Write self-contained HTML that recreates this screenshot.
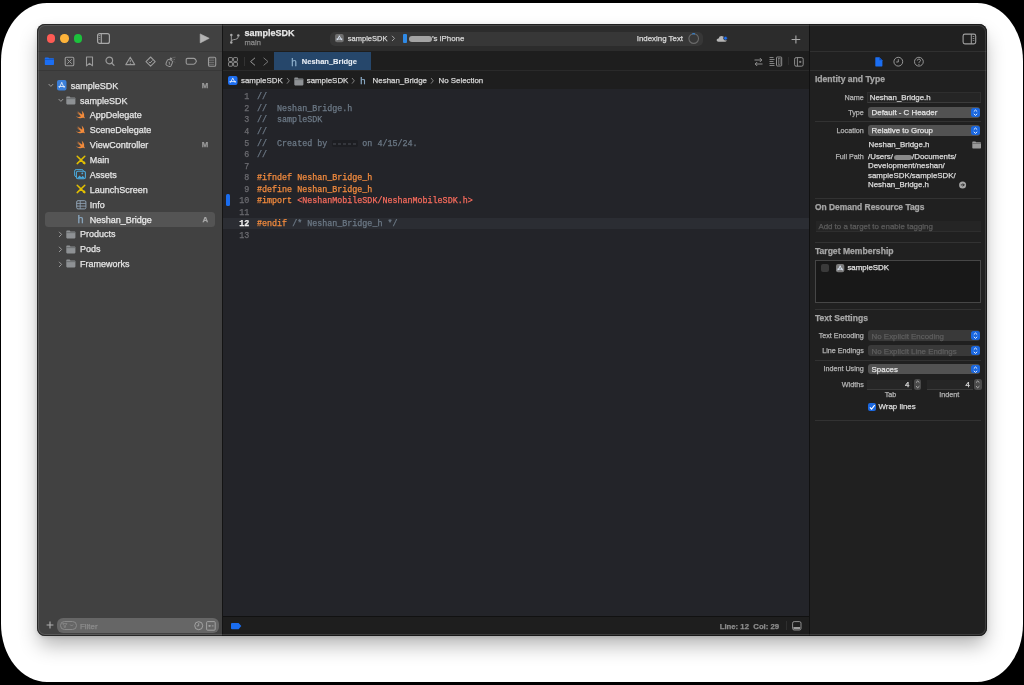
<!DOCTYPE html>
<html><head><meta charset="utf-8">
<style>
*{box-sizing:border-box}
html,body{margin:0;padding:0}
body{width:1024px;height:685px;background:#000;overflow:hidden;position:relative;font-family:"Liberation Sans",sans-serif;}
.a{position:absolute}
svg.a{overflow:visible}
.t{position:absolute;white-space:pre;line-height:1;-webkit-text-stroke:0.25px currentColor}
#paper{left:1px;top:3px;width:1022px;height:679px;background:#fff;border-radius:46px/58px}
#shadow{left:37px;top:24px;width:950px;height:612px;border-radius:8px;box-shadow:0 11px 20px -2px rgba(0,0,0,0.30),0 1px 4px rgba(0,0,0,0.12)}
#win{left:37px;top:24px;width:950px;height:612px;border-radius:8px;overflow:hidden;background:#1f1f1f}
#in{left:-37px;top:-24px;width:1024px;height:685px;will-change:transform}
</style></head><body>
<div class="a" id="paper"></div>
<div class="a" id="shadow"></div>
<div class="a" id="win"><div class="a" id="in">
<div class="a" style="left:37px;top:24px;width:185px;height:612px;background:#414141;"></div>
<div class="a" style="left:37px;top:51px;width:185px;height:1px;background:#383838;"></div>
<div class="a" style="left:37px;top:70px;width:185px;height:1px;background:#383838;"></div>
<div class="a" style="left:222px;top:24px;width:1px;height:612px;background:#141414;"></div>
<div class="a" style="left:223px;top:24px;width:586px;height:27px;background:#2c2c2c;"></div>
<div class="a" style="left:223px;top:51px;width:586px;height:19px;background:#1e1e1e;"></div>
<div class="a" style="left:223px;top:70px;width:586px;height:1px;background:#2a2a2a;"></div>
<div class="a" style="left:223px;top:71px;width:586px;height:18px;background:#1e1e1e;"></div>
<div class="a" style="left:223px;top:89px;width:586px;height:527px;background:#232429;"></div>
<div class="a" style="left:223px;top:616px;width:586px;height:1px;background:#111111;"></div>
<div class="a" style="left:223px;top:617px;width:586px;height:19px;background:#1e1e1e;"></div>
<div class="a" style="left:809px;top:24px;width:1px;height:612px;background:#111111;"></div>
<div class="a" style="left:810px;top:24px;width:177px;height:612px;background:#202020;"></div>
<div class="a" style="left:810px;top:51px;width:177px;height:1px;background:#303030;"></div>
<div class="a" style="left:810px;top:70px;width:177px;height:1px;background:#303030;"></div>
<div class="a" style="left:46.70px;top:34.35px;width:8.4px;height:8.4px;border-radius:50%;background:#fe5b54"></div>
<div class="a" style="left:60.20px;top:34.35px;width:8.4px;height:8.4px;border-radius:50%;background:#fdb33a"></div>
<div class="a" style="left:73.65px;top:34.35px;width:8.4px;height:8.4px;border-radius:50%;background:#1cc13c"></div>
<svg class="a" style="left:96px;top:32px;" width="15" height="13" viewBox="0 0 15 13"><rect x="1.6" y="1.6" width="11.8" height="9.8" rx="2" fill="none" stroke="#a8a8a8" stroke-width="1.2"/><line x1="5.3" y1="1.6" x2="5.3" y2="11.4" stroke="#a8a8a8" stroke-width="1.1"/><rect x="2.6" y="3" width="1.6" height="1" fill="#888"/><rect x="2.6" y="5" width="1.6" height="1" fill="#888"/><rect x="2.6" y="7" width="1.6" height="1" fill="#777"/></svg>
<svg class="a" style="left:199px;top:33px;" width="12" height="12" viewBox="0 0 12 12"><path d="M1.2 0.9 L10.2 5.3 L1.2 9.9 Z" fill="#b4b4b4" stroke="#b4b4b4" stroke-width="0.6" stroke-linejoin="round"/></svg>
<svg class="a" style="left:44px;top:56px;" width="11" height="10" viewBox="0 0 11 10"><path d="M0.8 2.2 Q0.8 1.4 1.6 1.4 L4.3 1.4 L5.2 2.2 L9.3 2.2 Q10 2.2 10 3 L10 8.3 Q10 9 9.3 9 L1.5 9 Q0.8 9 0.8 8.3 Z" fill="#1c6ef2"/><rect x="0.8" y="3.2" width="9.2" height="0.6" fill="#0d4fb8"/></svg>
<svg class="a" style="left:64px;top:56px;" width="11" height="11" viewBox="0 0 11 11"><rect x="1.2" y="1.2" width="8.6" height="8.6" rx="1.3" fill="none" stroke="#9a9a9a" stroke-width="1.1"/><path d="M3.3 3.3 L7.7 7.7 M7.7 3.3 L3.3 7.7" stroke="#9a9a9a" stroke-width="1"/></svg>
<svg class="a" style="left:85px;top:56px;" width="9" height="11" viewBox="0 0 9 11"><path d="M1.5 1 L7.5 1 L7.5 9.8 L4.5 7.3 L1.5 9.8 Z" fill="none" stroke="#9a9a9a" stroke-width="1.1" stroke-linejoin="round"/></svg>
<svg class="a" style="left:105px;top:56px;" width="10" height="11" viewBox="0 0 10 11"><circle cx="4.3" cy="4.5" r="3.3" fill="none" stroke="#9a9a9a" stroke-width="1.2"/><path d="M6.7 7 L9 9.4" stroke="#9a9a9a" stroke-width="1.3" stroke-linecap="round"/></svg>
<svg class="a" style="left:125px;top:56px;" width="11" height="10" viewBox="0 0 11 10"><path d="M5.25 1.2 L9.7 8.6 L0.8 8.6 Z" fill="none" stroke="#9a9a9a" stroke-width="1.1" stroke-linejoin="round"/><path d="M5.25 3.8 L5.25 6.2" stroke="#9a9a9a" stroke-width="1"/><circle cx="5.25" cy="7.4" r="0.5" fill="#9a9a9a"/></svg>
<svg class="a" style="left:145px;top:56px;" width="11" height="11" viewBox="0 0 11 11"><path d="M5.6 1 L10.2 5.6 L5.6 10.2 L1 5.6 Z" fill="none" stroke="#9a9a9a" stroke-width="1.1" stroke-linejoin="round"/><path d="M3.8 5.8 L5.1 7 L7.5 4.4" fill="none" stroke="#9a9a9a" stroke-width="1"/></svg>
<svg class="a" style="left:165px;top:56px;" width="12" height="11" viewBox="0 0 12 11"><g transform="rotate(22 4.2 7)"><rect x="1.4" y="3.8" width="5.6" height="6.4" rx="1.8" fill="none" stroke="#9a9a9a" stroke-width="1"/><rect x="3" y="1.4" width="2.2" height="2.2" rx="0.4" fill="#9a9a9a"/></g><path d="M3.6 6.2 Q5 5.6 4.4 7.2 Q3.6 8.6 5.2 8.4" fill="none" stroke="#9a9a9a" stroke-width="0.8"/><path d="M7.6 1.6 L10.6 1.2 M7.4 3.2 L10 3.6 M8.4 5 L10.2 6.4" stroke="#808080" stroke-width="0.8" stroke-dasharray="1 0.8"/></svg>
<svg class="a" style="left:185px;top:57px;" width="13" height="9" viewBox="0 0 13 9"><path d="M2.6 1.4 L8.6 1.4 Q9.8 1.4 10.6 2.6 L11.4 4.2 L10.6 5.8 Q9.8 7.2 8.6 7.2 L2.6 7.2 Q1.2 7.2 1.2 5.8 L1.2 2.8 Q1.2 1.4 2.6 1.4 Z" fill="none" stroke="#9a9a9a" stroke-width="1.1" stroke-linejoin="round"/></svg>
<svg class="a" style="left:207px;top:56px;" width="10" height="11" viewBox="0 0 10 11"><rect x="1.5" y="1.2" width="7.2" height="9" rx="1.3" fill="none" stroke="#9a9a9a" stroke-width="1.1"/><path d="M2 2.9 L7.2 2.9 M2 4.7 L7.2 4.7 M2 6.5 L7.2 6.5 M2 8.3 L7.2 8.3" stroke="#8a8a8a" stroke-width="0.6"/></svg>
<div class="a" style="left:45px;top:212px;width:170px;height:14.5px;background:#545454;border-radius:3.5px"></div>
<svg class="a" style="left:48px;top:82.5px;" width="6" height="5" viewBox="0 0 6 5"><path d="M0.6 1 L2.9 3.4 L5.2 1" fill="none" stroke="#9a9a9a" stroke-width="1"/></svg>
<svg class="a" style="left:57px;top:80.2px;" width="9.5" height="10.5" viewBox="0 0 9.5 10.5"><rect x="0" y="0" width="9.5" height="10.5" rx="2" fill="#3b7fd9"/><path d="M4.75 2.625 L7.125 7.56 M4.75 2.625 L2.375 7.56 M1.9000000000000001 6.51 L7.6000000000000005 6.51" stroke="#dfe9f7" stroke-width="0.9" stroke-linecap="round"/></svg>
<div class="t" style="left:70.7px;top:81.68px;font-size:9px;color:#e6e6e6;font-weight:400;">sampleSDK</div>
<div class="t" style="left:201.8px;top:81.90px;font-size:7.8px;color:#9a9a9a;font-weight:700;">M</div>
<svg class="a" style="left:57.5px;top:97.5px;" width="6" height="5" viewBox="0 0 6 5"><path d="M0.6 1 L2.9 3.4 L5.2 1" fill="none" stroke="#9a9a9a" stroke-width="1"/></svg>
<svg class="a" style="left:66px;top:96px;" width="10" height="9" viewBox="0 0 10 9"><path d="M0.3 1.3 Q0.3 0.5 1.1 0.5 L3.6 0.5 L4.5 1.4 L8.6 1.4 Q9.4 1.4 9.4 2.2 L9.4 7.6 Q9.4 8.4 8.6 8.4 L1.1 8.4 Q0.3 8.4 0.3 7.6 Z" fill="#8e9194"/><rect x="0.3" y="2.4" width="9.1" height="0.7" fill="#5e6163"/></svg>
<div class="t" style="left:79.9px;top:96.55px;font-size:9px;color:#e6e6e6;font-weight:400;">sampleSDK</div>
<svg class="a" style="left:75px;top:110.44px;" width="11" height="9" viewBox="0 0 11 9"><path d="M6.4 0.6 C8.6 2.2 9.6 4.4 9.1 6.4 C9.6 7.1 9.9 7.8 9.8 8.4 C9.3 7.8 8.6 7.6 7.9 7.8 C6.3 8.6 3.8 8.7 0.7 6.3 C2.6 7.1 4.5 7.2 6 6.3 C4.2 5.2 2.7 3.7 1.5 2.1 C2.9 3.2 4.3 4.2 5.2 4.7 C4.1 3.6 3.2 2.4 2.4 1.1 C4.3 2.9 6.2 4.2 7.1 4.8 C7.5 3.6 7.3 2.1 6.4 0.6 Z" fill="#f38b3b"/></svg>
<div class="t" style="left:89.8px;top:111.42px;font-size:9px;color:#e6e6e6;font-weight:400;">AppDelegate</div>
<svg class="a" style="left:75px;top:125.31px;" width="11" height="9" viewBox="0 0 11 9"><path d="M6.4 0.6 C8.6 2.2 9.6 4.4 9.1 6.4 C9.6 7.1 9.9 7.8 9.8 8.4 C9.3 7.8 8.6 7.6 7.9 7.8 C6.3 8.6 3.8 8.7 0.7 6.3 C2.6 7.1 4.5 7.2 6 6.3 C4.2 5.2 2.7 3.7 1.5 2.1 C2.9 3.2 4.3 4.2 5.2 4.7 C4.1 3.6 3.2 2.4 2.4 1.1 C4.3 2.9 6.2 4.2 7.1 4.8 C7.5 3.6 7.3 2.1 6.4 0.6 Z" fill="#f38b3b"/></svg>
<div class="t" style="left:89.8px;top:126.29px;font-size:9px;color:#e6e6e6;font-weight:400;">SceneDelegate</div>
<svg class="a" style="left:75px;top:140.18px;" width="11" height="9" viewBox="0 0 11 9"><path d="M6.4 0.6 C8.6 2.2 9.6 4.4 9.1 6.4 C9.6 7.1 9.9 7.8 9.8 8.4 C9.3 7.8 8.6 7.6 7.9 7.8 C6.3 8.6 3.8 8.7 0.7 6.3 C2.6 7.1 4.5 7.2 6 6.3 C4.2 5.2 2.7 3.7 1.5 2.1 C2.9 3.2 4.3 4.2 5.2 4.7 C4.1 3.6 3.2 2.4 2.4 1.1 C4.3 2.9 6.2 4.2 7.1 4.8 C7.5 3.6 7.3 2.1 6.4 0.6 Z" fill="#f38b3b"/></svg>
<div class="t" style="left:89.8px;top:141.16px;font-size:9px;color:#e6e6e6;font-weight:400;">ViewController</div>
<div class="t" style="left:201.8px;top:141.38px;font-size:7.8px;color:#9a9a9a;font-weight:700;">M</div>
<svg class="a" style="left:75.8px;top:154.64999999999998px;" width="10" height="10" viewBox="0 0 10 10"><path d="M1.2 1.2 L8.8 8.6 M8.8 1.2 L1.2 8.6" stroke="#e3c000" stroke-width="1.5" stroke-linecap="round"/><circle cx="8" cy="7.8" r="1.3" fill="#e3c000"/></svg>
<div class="t" style="left:89.8px;top:156.03px;font-size:9px;color:#e6e6e6;font-weight:400;">Main</div>
<svg class="a" style="left:74px;top:169px;" width="12" height="10.5" viewBox="0 0 12 10.5"><rect x="0.6" y="0.6" width="8.8" height="7" rx="1.5" fill="none" stroke="#4aa9dc" stroke-width="1"/><rect x="2.4" y="2.2" width="9" height="7.6" rx="1.5" fill="#414141" stroke="#4aa9dc" stroke-width="1.1"/><path d="M3 9.6 L5.5 6.6 L7.3 8.2 L8.8 6.8 L11 9.6 Z" fill="#4aa9dc"/><circle cx="8.3" cy="4.4" r="0.9" fill="#4aa9dc"/></svg>
<div class="t" style="left:89.8px;top:170.90px;font-size:9px;color:#e6e6e6;font-weight:400;">Assets</div>
<svg class="a" style="left:75.8px;top:184.39px;" width="10" height="10" viewBox="0 0 10 10"><path d="M1.2 1.2 L8.8 8.6 M8.8 1.2 L1.2 8.6" stroke="#e3c000" stroke-width="1.5" stroke-linecap="round"/><circle cx="8" cy="7.8" r="1.3" fill="#e3c000"/></svg>
<div class="t" style="left:89.8px;top:185.77px;font-size:9px;color:#e6e6e6;font-weight:400;">LaunchScreen</div>
<svg class="a" style="left:75.5px;top:199.5px;" width="11" height="9.5" viewBox="0 0 11 9.5"><rect x="0.7" y="0.7" width="9.2" height="8.2" rx="1.3" fill="none" stroke="#8ea2b3" stroke-width="1"/><path d="M0.7 3.4 L9.9 3.4 M0.7 6.1 L9.9 6.1 M4.2 0.7 L4.2 8.9" stroke="#8ea2b3" stroke-width="0.9"/></svg>
<div class="t" style="left:89.8px;top:200.64px;font-size:9px;color:#e6e6e6;font-weight:400;">Info</div>
<div class="t" style="left:77.6px;top:214.19px;font-size:11px;color:#8aa8c0;font-weight:400;">h</div>
<div class="t" style="left:89.8px;top:215.51px;font-size:9px;color:#ececec;font-weight:400;">Neshan_Bridge</div>
<div class="t" style="left:202.4px;top:215.53px;font-size:7.8px;color:#a8a8a8;font-weight:700;">A</div>
<svg class="a" style="left:58.4px;top:230.8px;" width="5" height="7" viewBox="0 0 5 7"><path d="M1 0.8 L3.6 3.4 L1 6" fill="none" stroke="#9a9a9a" stroke-width="1"/></svg>
<svg class="a" style="left:66px;top:229.7px;" width="10" height="9" viewBox="0 0 10 9"><path d="M0.3 1.3 Q0.3 0.5 1.1 0.5 L3.6 0.5 L4.5 1.4 L8.6 1.4 Q9.4 1.4 9.4 2.2 L9.4 7.6 Q9.4 8.4 8.6 8.4 L1.1 8.4 Q0.3 8.4 0.3 7.6 Z" fill="#8e9194"/><rect x="0.3" y="2.4" width="9.1" height="0.7" fill="#5e6163"/></svg>
<div class="t" style="left:80px;top:230.38px;font-size:9px;color:#e6e6e6;font-weight:400;">Products</div>
<svg class="a" style="left:58.4px;top:245.67000000000002px;" width="5" height="7" viewBox="0 0 5 7"><path d="M1 0.8 L3.6 3.4 L1 6" fill="none" stroke="#9a9a9a" stroke-width="1"/></svg>
<svg class="a" style="left:66px;top:244.57px;" width="10" height="9" viewBox="0 0 10 9"><path d="M0.3 1.3 Q0.3 0.5 1.1 0.5 L3.6 0.5 L4.5 1.4 L8.6 1.4 Q9.4 1.4 9.4 2.2 L9.4 7.6 Q9.4 8.4 8.6 8.4 L1.1 8.4 Q0.3 8.4 0.3 7.6 Z" fill="#8e9194"/><rect x="0.3" y="2.4" width="9.1" height="0.7" fill="#5e6163"/></svg>
<div class="t" style="left:80px;top:245.25px;font-size:9px;color:#e6e6e6;font-weight:400;">Pods</div>
<svg class="a" style="left:58.4px;top:260.54px;" width="5" height="7" viewBox="0 0 5 7"><path d="M1 0.8 L3.6 3.4 L1 6" fill="none" stroke="#9a9a9a" stroke-width="1"/></svg>
<svg class="a" style="left:66px;top:259.44px;" width="10" height="9" viewBox="0 0 10 9"><path d="M0.3 1.3 Q0.3 0.5 1.1 0.5 L3.6 0.5 L4.5 1.4 L8.6 1.4 Q9.4 1.4 9.4 2.2 L9.4 7.6 Q9.4 8.4 8.6 8.4 L1.1 8.4 Q0.3 8.4 0.3 7.6 Z" fill="#8e9194"/><rect x="0.3" y="2.4" width="9.1" height="0.7" fill="#5e6163"/></svg>
<div class="t" style="left:80px;top:260.12px;font-size:9px;color:#e6e6e6;font-weight:400;">Frameworks</div>
<svg class="a" style="left:46px;top:621px;" width="8" height="8" viewBox="0 0 8 8"><path d="M4 0.6 L4 7.4 M0.6 4 L7.4 4" stroke="#b0b0b0" stroke-width="1.1"/></svg>
<div class="a" style="left:57px;top:618px;width:162px;height:15px;background:#666666;border-radius:6px"></div>
<div class="a" style="left:59.5px;top:621.2px;width:17.5px;height:9px;background:transparent;border:1px solid #8a8a8a;border-radius:4.5px"></div>
<svg class="a" style="left:61px;top:622px;" width="14" height="7" viewBox="0 0 14 7"><path d="M1.6 1.6 L6 1.6 L4.4 3.6 L4.4 5.4 L3.2 5.4 L3.2 3.6 Z" fill="none" stroke="#8a8a8a" stroke-width="0.8"/><path d="M9.2 2.6 L10.6 4 L12 2.6" fill="none" stroke="#8a8a8a" stroke-width="0.9"/></svg>
<div class="t" style="left:80px;top:622.61px;font-size:7.9px;color:#8c8c8c;font-weight:400;">Filter</div>
<svg class="a" style="left:193.5px;top:620.8px;" width="10" height="10" viewBox="0 0 10 10"><circle cx="4.7" cy="4.7" r="4" fill="none" stroke="#a8a8a8" stroke-width="0.9"/><path d="M4.7 2.2 L4.7 4.9 L2.8 4.9" fill="none" stroke="#a8a8a8" stroke-width="0.9"/></svg>
<svg class="a" style="left:205.5px;top:620.8px;" width="10" height="10" viewBox="0 0 10 10"><rect x="0.6" y="0.6" width="8.6" height="8.6" rx="1" fill="none" stroke="#a8a8a8" stroke-width="0.9"/><path d="M2.2 4.9 L5 4.9 M5.8 4.9 L7.6 4.9" stroke="#a8a8a8" stroke-width="0.9"/><path d="M2.6 4.9 L4 3.8 L4 6 Z" fill="#a8a8a8"/></svg>
<svg class="a" style="left:228.5px;top:33px;" width="12" height="12" viewBox="0 0 12 12"><circle cx="2.3" cy="1.9" r="1.25" fill="#a8a8a8"/><circle cx="2.3" cy="9.6" r="1.25" fill="#a8a8a8"/><circle cx="9.3" cy="2.6" r="1.25" fill="#a8a8a8"/><path d="M2.3 2.9 L2.3 8.6 M9.3 3.7 Q9.3 6 6.4 6.4 L4.4 6.7 Q2.6 7 2.3 8.4" fill="none" stroke="#a8a8a8" stroke-width="0.9"/></svg>
<div class="t" style="left:244.6px;top:28.68px;font-size:9px;color:#e6e6e6;font-weight:700;">sampleSDK</div>
<div class="t" style="left:244.6px;top:39.25px;font-size:7.5px;color:#8a8a8a;font-weight:400;">main</div>
<div class="a" style="left:329.5px;top:31.5px;width:373.5px;height:14.5px;background:#373737;border-radius:5px"></div>
<svg class="a" style="left:334.8px;top:34.4px;" width="8.8" height="8.2" viewBox="0 0 8.8 8.2"><rect x="0" y="0" width="8.8" height="8.2" rx="2" fill="#6e6e6e"/><path d="M4.4 2.05 L6.6000000000000005 5.903999999999999 M4.4 2.05 L2.2 5.903999999999999 M1.7600000000000002 5.084 L7.040000000000001 5.084" stroke="#dfe9f7" stroke-width="0.9" stroke-linecap="round"/></svg>
<div class="t" style="left:347.8px;top:35.15px;font-size:7.5px;color:#d8d8d8;font-weight:400;">sampleSDK</div>
<svg class="a" style="left:391px;top:35px;" width="5" height="7" viewBox="0 0 5 7"><path d="M1 0.8 L3.5 3.4 L1 6" fill="none" stroke="#b0b0b0" stroke-width="0.9"/></svg>
<div class="a" style="left:402.8px;top:33.8px;width:3.9px;height:9.4px;background:#2f8ae6;border-radius:1px"></div>
<div class="a" style="left:409px;top:35.6px;width:23px;height:6px;background:#a4a4a4;border-radius:3px;filter:blur(0.6px)"></div>
<div class="t" style="left:432px;top:34.81px;font-size:7.9px;color:#d8d8d8;font-weight:400;">’s iPhone</div>
<div class="t" style="left:636.7px;top:34.81px;font-size:7.9px;color:#dcdcdc;font-weight:400;">Indexing Text</div>
<svg class="a" style="left:687.5px;top:33px;" width="12" height="12" viewBox="0 0 12 12"><circle cx="5.7" cy="5.6" r="4.8" fill="none" stroke="#6a6a6a" stroke-width="1.1"/><path d="M4.2 1 A4.8 4.8 0 0 1 7 0.95" fill="none" stroke="#2f8ae6" stroke-width="1.1"/></svg>
<svg class="a" style="left:716px;top:35px;" width="13" height="8" viewBox="0 0 13 8"><path d="M2.5 6.8 Q0.5 6.8 0.6 5 Q0.8 3.4 2.6 3.5 Q3.2 1 5.8 1.1 Q8.3 1.3 8.7 3.6 Q10.6 3.9 10.6 5.4 Q10.5 6.8 8.8 6.8 Z" fill="#b6b6b6"/><circle cx="9.5" cy="3.2" r="1.9" fill="#1b6ef2" stroke="#2c2c2c" stroke-width="0.8"/></svg>
<svg class="a" style="left:791px;top:34.5px;" width="10" height="9" viewBox="0 0 10 9"><path d="M4.9 0.5 L4.9 8.5 M0.6 4.5 L9.2 4.5" stroke="#a8a8a8" stroke-width="1.1"/></svg>
<svg class="a" style="left:228px;top:56.5px;" width="11" height="10" viewBox="0 0 11 10"><rect x="0.6" y="0.6" width="3.8" height="3.8" rx="0.6" fill="none" stroke="#9a9a9a" stroke-width="0.9"/><rect x="5.6" y="0.6" width="3.8" height="3.8" rx="0.6" fill="none" stroke="#9a9a9a" stroke-width="0.9"/><rect x="0.6" y="5.4" width="3.8" height="3.8" rx="0.6" fill="none" stroke="#9a9a9a" stroke-width="0.9"/><rect x="5.6" y="5.4" width="3.8" height="3.8" rx="0.6" fill="none" stroke="#9a9a9a" stroke-width="0.9"/></svg>
<div class="a" style="left:244px;top:57px;width:1px;height:9px;background:#333333;"></div>
<svg class="a" style="left:249px;top:57px;" width="8" height="10" viewBox="0 0 8 10"><path d="M6 0.8 L1.6 4.6 L6 8.4" fill="none" stroke="#9a9a9a" stroke-width="1"/></svg>
<svg class="a" style="left:262px;top:57px;" width="8" height="10" viewBox="0 0 8 10"><path d="M1.6 0.8 L6 4.6 L1.6 8.4" fill="none" stroke="#777777" stroke-width="1"/></svg>
<div class="a" style="left:274px;top:51.8px;width:96.5px;height:18.4px;background:#26476b;"></div>
<div class="t" style="left:291.2px;top:57.83px;font-size:10px;color:#8fb0cc;font-weight:400;">h</div>
<div class="t" style="left:301.8px;top:58.25px;font-size:7.5px;color:#e8eef5;font-weight:700;-webkit-text-stroke:0.1px currentColor">Neshan_Bridge</div>
<svg class="a" style="left:753px;top:56.5px;" width="11" height="10" viewBox="0 0 11 10"><path d="M1.5 3 L8.8 3 M6.8 1 L8.8 3 L6.8 5 M9.5 7 L2.2 7 M4.2 5 L2.2 7 L4.2 9" fill="none" stroke="#9a9a9a" stroke-width="0.9"/></svg>
<svg class="a" style="left:769px;top:56px;" width="14" height="11" viewBox="0 0 14 11"><path d="M0.5 1.5 L4.5 1.5 M0.5 3.5 L5.5 3.5 M0.5 5.5 L4.5 5.5 M0.5 7.5 L5.5 7.5 M0.5 9.5 L5.5 9.5" stroke="#8c8c8c" stroke-width="0.9"/><rect x="7.5" y="1" width="5.2" height="9" rx="0.8" fill="none" stroke="#9a9a9a" stroke-width="0.9"/><rect x="9.3" y="2.6" width="1.8" height="5.8" fill="none" stroke="#8a8a8a" stroke-width="0.6"/></svg>
<div class="a" style="left:787.5px;top:57px;width:1px;height:8px;background:#2e2e2e;"></div>
<svg class="a" style="left:794px;top:56.5px;" width="10" height="10" viewBox="0 0 10 10"><rect x="0.6" y="0.6" width="8.6" height="8.6" rx="1.6" fill="none" stroke="#9a9a9a" stroke-width="0.9"/><path d="M3.4 0.6 L3.4 9.2" stroke="#9a9a9a" stroke-width="0.9"/><path d="M5 4.9 L7.4 4.9 M6.2 3.8 L6.2 6" stroke="#9a9a9a" stroke-width="0.8"/></svg>
<svg class="a" style="left:228.2px;top:76px;" width="9.5" height="9" viewBox="0 0 9.5 9"><rect x="0" y="0" width="9.5" height="9" rx="2" fill="#1d6ef0"/><path d="M4.75 2.25 L7.125 6.4799999999999995 M4.75 2.25 L2.375 6.4799999999999995 M1.9000000000000001 5.58 L7.6000000000000005 5.58" stroke="#dfe9f7" stroke-width="0.9" stroke-linecap="round"/></svg>
<div class="t" style="left:241px;top:76.51px;font-size:7.9px;color:#d6d6d6;font-weight:400;">sampleSDK</div>
<svg class="a" style="left:285.5px;top:76.5px;" width="5" height="8" viewBox="0 0 5 8"><path d="M1 1 L3.3 3.8 L1 6.6" fill="none" stroke="#9a9a9a" stroke-width="0.8"/></svg>
<svg class="a" style="left:293.8px;top:76.5px;" width="10" height="9" viewBox="0 0 10 9"><path d="M0.3 1.3 Q0.3 0.5 1.1 0.5 L3.6 0.5 L4.5 1.4 L8.6 1.4 Q9.4 1.4 9.4 2.2 L9.4 7.6 Q9.4 8.4 8.6 8.4 L1.1 8.4 Q0.3 8.4 0.3 7.6 Z" fill="#8e9194"/><rect x="0.3" y="2.4" width="9.1" height="0.7" fill="#5e6163"/></svg>
<div class="t" style="left:306.7px;top:76.51px;font-size:7.9px;color:#d6d6d6;font-weight:400;">sampleSDK</div>
<svg class="a" style="left:351px;top:76.5px;" width="5" height="8" viewBox="0 0 5 8"><path d="M1 1 L3.3 3.8 L1 6.6" fill="none" stroke="#9a9a9a" stroke-width="0.8"/></svg>
<div class="t" style="left:360.3px;top:75.96px;font-size:9.5px;color:#8fb0cc;font-weight:400;">h</div>
<div class="t" style="left:372.6px;top:76.51px;font-size:7.9px;color:#d6d6d6;font-weight:400;">Neshan_Bridge</div>
<svg class="a" style="left:430.3px;top:76.5px;" width="5" height="8" viewBox="0 0 5 8"><path d="M1 1 L3.3 3.8 L1 6.6" fill="none" stroke="#9a9a9a" stroke-width="0.8"/></svg>
<div class="t" style="left:438.5px;top:76.51px;font-size:7.9px;color:#d6d6d6;font-weight:400;">No Selection</div>
<div class="a" style="left:223px;top:217.6px;width:586px;height:11.2px;background:#2b2d33;"></div>
<div class="a" style="left:226.4px;top:194px;width:3.4px;height:12.3px;background:#1a6df0;border-radius:1.5px"></div>
<div class="t" style="left:244.17999999999998px;top:93.41px;font-size:8.37px;color:#6b6b70;font-weight:400;font-family:'Liberation Mono',monospace;">1</div>
<div class="t" style="left:244.17999999999998px;top:104.94px;font-size:8.37px;color:#6b6b70;font-weight:400;font-family:'Liberation Mono',monospace;">2</div>
<div class="t" style="left:244.17999999999998px;top:116.47px;font-size:8.37px;color:#6b6b70;font-weight:400;font-family:'Liberation Mono',monospace;">3</div>
<div class="t" style="left:244.17999999999998px;top:128.00px;font-size:8.37px;color:#6b6b70;font-weight:400;font-family:'Liberation Mono',monospace;">4</div>
<div class="t" style="left:244.17999999999998px;top:139.53px;font-size:8.37px;color:#6b6b70;font-weight:400;font-family:'Liberation Mono',monospace;">5</div>
<div class="t" style="left:244.17999999999998px;top:151.06px;font-size:8.37px;color:#6b6b70;font-weight:400;font-family:'Liberation Mono',monospace;">6</div>
<div class="t" style="left:244.17999999999998px;top:162.59px;font-size:8.37px;color:#6b6b70;font-weight:400;font-family:'Liberation Mono',monospace;">7</div>
<div class="t" style="left:244.17999999999998px;top:174.12px;font-size:8.37px;color:#6b6b70;font-weight:400;font-family:'Liberation Mono',monospace;">8</div>
<div class="t" style="left:244.17999999999998px;top:185.65px;font-size:8.37px;color:#6b6b70;font-weight:400;font-family:'Liberation Mono',monospace;">9</div>
<div class="t" style="left:239.16px;top:197.18px;font-size:8.37px;color:#6b6b70;font-weight:400;font-family:'Liberation Mono',monospace;">10</div>
<div class="t" style="left:239.16px;top:208.71px;font-size:8.37px;color:#6b6b70;font-weight:400;font-family:'Liberation Mono',monospace;">11</div>
<div class="t" style="left:239.16px;top:220.24px;font-size:8.37px;color:#f0f0f0;font-weight:700;font-family:'Liberation Mono',monospace;">12</div>
<div class="t" style="left:239.16px;top:231.77px;font-size:8.37px;color:#6b6b70;font-weight:400;font-family:'Liberation Mono',monospace;">13</div>
<div class="t" style="left:257.0px;top:93.41px;font-size:8.37px;color:#d0d0d0;font-weight:400;font-family:'Liberation Mono',monospace;"><span style="color:#6c7986">//</span></div>
<div class="t" style="left:257.0px;top:104.94px;font-size:8.37px;color:#d0d0d0;font-weight:400;font-family:'Liberation Mono',monospace;"><span style="color:#6c7986">//  Neshan_Bridge.h</span></div>
<div class="t" style="left:257.0px;top:116.47px;font-size:8.37px;color:#d0d0d0;font-weight:400;font-family:'Liberation Mono',monospace;"><span style="color:#6c7986">//  sampleSDK</span></div>
<div class="t" style="left:257.0px;top:128.00px;font-size:8.37px;color:#d0d0d0;font-weight:400;font-family:'Liberation Mono',monospace;"><span style="color:#6c7986">//</span></div>
<div class="t" style="left:257.0px;top:139.53px;font-size:8.37px;color:#d0d0d0;font-weight:400;font-family:'Liberation Mono',monospace;"><span style="color:#6c7986">//  Created by       on 4/15/24.</span></div>
<div class="a" style="left:331.5px;top:139.5px;width:26px;height:7px;background:#1d1e22;border-radius:2px;filter:blur(0.6px)"></div>
<div class="a" style="left:333.0px;top:143.4px;width:3px;height:1.4px;background:#34363c;filter:blur(0.3px)"></div>
<div class="a" style="left:338.02px;top:143.4px;width:3px;height:1.4px;background:#34363c;filter:blur(0.3px)"></div>
<div class="a" style="left:343.04px;top:143.4px;width:3px;height:1.4px;background:#34363c;filter:blur(0.3px)"></div>
<div class="a" style="left:348.06px;top:143.4px;width:3px;height:1.4px;background:#34363c;filter:blur(0.3px)"></div>
<div class="a" style="left:353.08px;top:143.4px;width:3px;height:1.4px;background:#34363c;filter:blur(0.3px)"></div>
<div class="t" style="left:257.0px;top:151.06px;font-size:8.37px;color:#d0d0d0;font-weight:400;font-family:'Liberation Mono',monospace;"><span style="color:#6c7986">//</span></div>
<div class="t" style="left:257.0px;top:174.12px;font-size:8.37px;color:#d0d0d0;font-weight:400;font-family:'Liberation Mono',monospace;"><span style="color:#f58c3e">#ifndef Neshan_Bridge_h</span></div>
<div class="t" style="left:257.0px;top:185.65px;font-size:8.37px;color:#d0d0d0;font-weight:400;font-family:'Liberation Mono',monospace;"><span style="color:#f58c3e">#define Neshan_Bridge_h</span></div>
<div class="t" style="left:257.0px;top:197.18px;font-size:8.37px;color:#d0d0d0;font-weight:400;font-family:'Liberation Mono',monospace;"><span style="color:#f58c3e">#import </span><span style="color:#f86c5d">&lt;NeshanMobileSDK/NeshanMobileSDK.h&gt;</span></div>
<div class="t" style="left:257.0px;top:220.24px;font-size:8.37px;color:#d0d0d0;font-weight:400;font-family:'Liberation Mono',monospace;"><span style="color:#f58c3e">#endif</span><span style="color:#6c7986"> /* Neshan_Bridge_h */</span></div>
<svg class="a" style="left:230.5px;top:622.5px;" width="11" height="7" viewBox="0 0 11 7"><path d="M0 1 Q0 0 1 0 L7.6 0 L10.3 3.1 L7.6 6.2 L1 6.2 Q0 6.2 0 5.2 Z" fill="#1a6df0"/></svg>
<div class="t" style="left:719.7px;top:622.54px;font-size:7.75px;color:#8c8c8c;font-weight:700;">Line: 12  Col: 29</div>
<div class="a" style="left:785.5px;top:621px;width:1px;height:9px;background:#2e2e2e;"></div>
<svg class="a" style="left:792px;top:621px;" width="10" height="10" viewBox="0 0 10 10"><rect x="0.6" y="0.6" width="8.4" height="8.4" rx="1.6" fill="none" stroke="#9a9a9a" stroke-width="0.9"/><rect x="1.4" y="6" width="6.8" height="2.2" fill="#9a9a9a"/></svg>
<svg class="a" style="left:961.5px;top:32.5px;" width="15" height="12" viewBox="0 0 15 12"><rect x="1.1" y="1.1" width="12.6" height="9.8" rx="1.8" fill="none" stroke="#a0a0a0" stroke-width="1.1"/><line x1="9.3" y1="1.1" x2="9.3" y2="10.9" stroke="#a0a0a0" stroke-width="1"/><rect x="10.7" y="3" width="1.6" height="1" fill="#888"/><rect x="10.7" y="5" width="1.6" height="1" fill="#888"/><rect x="10.7" y="7" width="1.6" height="1" fill="#777"/></svg>
<svg class="a" style="left:875px;top:56.5px;" width="8" height="10" viewBox="0 0 8 10"><path d="M0.3 0.8 Q0.3 0.2 0.9 0.2 L4.4 0.2 L7.4 3.2 L7.4 8.8 Q7.4 9.4 6.8 9.4 L0.9 9.4 Q0.3 9.4 0.3 8.8 Z" fill="#1b6ef2"/><path d="M4.4 0.2 L4.4 3.2 L7.4 3.2" fill="#0f4fb8"/></svg>
<svg class="a" style="left:893px;top:57px;" width="11" height="10" viewBox="0 0 11 10"><circle cx="5.3" cy="4.7" r="4.4" fill="none" stroke="#a0a0a0" stroke-width="0.9"/><path d="M5.3 2.2 L5.3 5 L3.2 5" fill="none" stroke="#a0a0a0" stroke-width="0.9"/></svg>
<svg class="a" style="left:913.5px;top:57px;" width="11" height="10" viewBox="0 0 11 10"><circle cx="4.9" cy="4.7" r="4.4" fill="none" stroke="#a0a0a0" stroke-width="0.9"/><path d="M3.3 3.6 Q3.3 2.1 4.9 2.1 Q6.5 2.1 6.5 3.5 Q6.5 4.4 5.5 4.8 Q4.9 5.1 4.9 5.9" fill="none" stroke="#a0a0a0" stroke-width="0.9"/><circle cx="4.9" cy="7.3" r="0.6" fill="#a0a0a0"/></svg>
<div class="t" style="left:814.9px;top:75.12px;font-size:8.6px;color:#a6a6a6;font-weight:700;">Identity and Type</div>
<div class="t" style="left:663.8px;width:200px;text-align:right;top:94.01px;font-size:7.2px;color:#b4b4b4">Name</div>
<div class="a" style="left:867px;top:92px;width:113.8px;height:10.6px;background:#252525;border:1px solid #2e2e2e;border-bottom:1px solid #3c3c3c"></div>
<div class="t" style="left:869.7px;top:94.11px;font-size:7.9px;color:#dcdcdc;font-weight:400;">Neshan_Bridge.h</div>
<div class="t" style="left:663.8px;width:200px;text-align:right;top:108.71px;font-size:7.2px;color:#b4b4b4">Type</div>
<div class="a" style="left:867.6px;top:106.9px;width:112.9px;height:10.9px;background:#525252;border-radius:3px"></div>
<div class="a" style="left:970.5px;top:107.80000000000001px;width:9px;height:9.1px;background:#1a67df;border-radius:2.5px"></div>
<svg class="a" style="left:970.5px;top:107.80000000000001px;" width="9" height="9.1" viewBox="0 0 9 9.1"><path d="M2.8 3.6 L4.5 2 L6.2 3.6 M2.8 5.8 L4.5 7.4 L6.2 5.8" fill="none" stroke="#ffffff" stroke-width="0.9"/></svg>
<div class="t" style="left:871.6px;top:108.81px;font-size:7.9px;color:#e2e2e2;font-weight:400;">Default - C Header</div>
<div class="a" style="left:815px;top:121px;width:165.5px;height:1px;background:#323232;"></div>
<div class="t" style="left:663.8px;width:200px;text-align:right;top:127.11px;font-size:7.2px;color:#b4b4b4">Location</div>
<div class="a" style="left:867.6px;top:125.2px;width:112.9px;height:10.7px;background:#525252;border-radius:3px"></div>
<div class="a" style="left:970.5px;top:126.10000000000001px;width:9px;height:8.899999999999999px;background:#1a67df;border-radius:2.5px"></div>
<svg class="a" style="left:970.5px;top:126.10000000000001px;" width="9" height="8.899999999999999" viewBox="0 0 9 8.899999999999999"><path d="M2.8 3.6 L4.5 2 L6.2 3.6 M2.8 5.8 L4.5 7.4 L6.2 5.8" fill="none" stroke="#ffffff" stroke-width="0.9"/></svg>
<div class="t" style="left:871.6px;top:127.21px;font-size:7.9px;color:#e2e2e2;font-weight:400;">Relative to Group</div>
<div class="t" style="left:868.5px;top:140.61px;font-size:7.9px;color:#dcdcdc;font-weight:400;">Neshan_Bridge.h</div>
<svg class="a" style="left:972.4px;top:140.5px;" width="10" height="8" viewBox="0 0 10 8"><path d="M0.3 1.1 Q0.3 0.4 1 0.4 L3.4 0.4 L4.2 1.2 L8.3 1.2 Q9 1.2 9 1.9 L9 6.7 Q9 7.4 8.3 7.4 L1 7.4 Q0.3 7.4 0.3 6.7 Z" fill="#9a9a9a"/><rect x="0.3" y="2.2" width="8.7" height="0.6" fill="#5a5a5a"/></svg>
<div class="t" style="left:663.8px;width:200px;text-align:right;top:153.31px;font-size:7.2px;color:#b4b4b4">Full Path</div>
<div class="t" style="left:868px;top:152.71px;font-size:7.9px;color:#dcdcdc;font-weight:400;">/Users/</div>
<div class="a" style="left:893.5px;top:154.8px;width:18.5px;height:5.2px;background:#8a8a8a;border-radius:2.5px;filter:blur(0.6px)"></div>
<div class="t" style="left:912px;top:152.71px;font-size:7.9px;color:#dcdcdc;font-weight:400;">/Documents/</div>
<div class="t" style="left:868px;top:162.11px;font-size:7.9px;color:#dcdcdc;font-weight:400;">Development/neshan/</div>
<div class="t" style="left:868px;top:171.51px;font-size:7.9px;color:#dcdcdc;font-weight:400;">sampleSDK/sampleSDK/</div>
<div class="t" style="left:868px;top:180.91px;font-size:7.9px;color:#dcdcdc;font-weight:400;">Neshan_Bridge.h</div>
<svg class="a" style="left:959px;top:181px;" width="8" height="8" viewBox="0 0 8 8"><circle cx="3.6" cy="3.9" r="3.5" fill="#a8a8a8"/><path d="M1.8 3.9 L5.2 3.9 M3.8 2.4 L5.3 3.9 L3.8 5.4" fill="none" stroke="#202020" stroke-width="0.9"/></svg>
<div class="a" style="left:815px;top:197.5px;width:165.5px;height:1px;background:#323232;"></div>
<div class="t" style="left:814.9px;top:203.35px;font-size:8.45px;color:#a6a6a6;font-weight:700;">On Demand Resource Tags</div>
<div class="a" style="left:816.2px;top:220.6px;width:164.6px;height:11.9px;background:#252525;border-bottom:1px solid #2e2e2e"></div>
<div class="t" style="left:818.4px;top:222.91px;font-size:7.9px;color:#5c5c5c;font-weight:400;">Add to a target to enable tagging</div>
<div class="a" style="left:815px;top:242px;width:165.5px;height:1px;background:#323232;"></div>
<div class="t" style="left:814.9px;top:246.92px;font-size:8.6px;color:#a6a6a6;font-weight:700;">Target Membership</div>
<div class="a" style="left:815.3px;top:260.1px;width:165.5px;height:42.6px;background:#181818;border:1px solid #464646"></div>
<div class="a" style="left:820.9px;top:264px;width:8.1px;height:7.9px;background:#3a3a3a;border-radius:2px"></div>
<svg class="a" style="left:836px;top:264px;" width="8.3" height="8.3" viewBox="0 0 8.3 8.3"><rect x="0" y="0" width="8.3" height="8.3" rx="2" fill="#7a7a7a"/><path d="M4.15 2.075 L6.2250000000000005 5.976 M4.15 2.075 L2.075 5.976 M1.6600000000000001 5.146000000000001 L6.640000000000001 5.146000000000001" stroke="#dfe9f7" stroke-width="0.9" stroke-linecap="round"/></svg>
<div class="t" style="left:847.4px;top:264.41px;font-size:7.9px;color:#e0e0e0;font-weight:400;">sampleSDK</div>
<div class="a" style="left:815px;top:308.8px;width:165.5px;height:1px;background:#323232;"></div>
<div class="t" style="left:814.9px;top:313.96px;font-size:8.55px;color:#a6a6a6;font-weight:700;">Text Settings</div>
<div class="t" style="left:663.8px;width:200px;text-align:right;top:331.91px;font-size:7.2px;color:#b4b4b4">Text Encoding</div>
<div class="a" style="left:867.6px;top:330.3px;width:112.9px;height:10.5px;background:#393939;border-radius:3px"></div>
<div class="a" style="left:970.5px;top:331.2px;width:9px;height:8.7px;background:#1a67df;border-radius:2.5px"></div>
<svg class="a" style="left:970.5px;top:331.2px;" width="9" height="8.7" viewBox="0 0 9 8.7"><path d="M2.8 3.6 L4.5 2 L6.2 3.6 M2.8 5.8 L4.5 7.4 L6.2 5.8" fill="none" stroke="#ffffff" stroke-width="0.9"/></svg>
<div class="t" style="left:871.6px;top:332.61px;font-size:7.9px;color:#5e5e5e;font-weight:400;">No Explicit Encoding</div>
<div class="t" style="left:663.8px;width:200px;text-align:right;top:346.91px;font-size:7.2px;color:#b4b4b4">Line Endings</div>
<div class="a" style="left:867.6px;top:345.2px;width:112.9px;height:10.6px;background:#393939;border-radius:3px"></div>
<div class="a" style="left:970.5px;top:346.09999999999997px;width:9px;height:8.799999999999999px;background:#1a67df;border-radius:2.5px"></div>
<svg class="a" style="left:970.5px;top:346.09999999999997px;" width="9" height="8.799999999999999" viewBox="0 0 9 8.799999999999999"><path d="M2.8 3.6 L4.5 2 L6.2 3.6 M2.8 5.8 L4.5 7.4 L6.2 5.8" fill="none" stroke="#ffffff" stroke-width="0.9"/></svg>
<div class="t" style="left:871.6px;top:347.61px;font-size:7.9px;color:#5e5e5e;font-weight:400;">No Explicit Line Endings</div>
<div class="a" style="left:815px;top:359.8px;width:165.5px;height:1px;background:#323232;"></div>
<div class="t" style="left:663.8px;width:200px;text-align:right;top:365.11px;font-size:7.2px;color:#b4b4b4">Indent Using</div>
<div class="a" style="left:867.6px;top:363.7px;width:112.9px;height:10.5px;background:#525252;border-radius:3px"></div>
<div class="a" style="left:970.5px;top:364.59999999999997px;width:9px;height:8.7px;background:#1a67df;border-radius:2.5px"></div>
<svg class="a" style="left:970.5px;top:364.59999999999997px;" width="9" height="8.7" viewBox="0 0 9 8.7"><path d="M2.8 3.6 L4.5 2 L6.2 3.6 M2.8 5.8 L4.5 7.4 L6.2 5.8" fill="none" stroke="#ffffff" stroke-width="0.9"/></svg>
<div class="t" style="left:871.6px;top:365.81px;font-size:7.9px;color:#e2e2e2;font-weight:400;">Spaces</div>
<div class="t" style="left:663.8px;width:200px;text-align:right;top:380.91px;font-size:7.2px;color:#b4b4b4">Widths</div>
<div class="a" style="left:867.1px;top:379.5px;width:44.9px;height:10.2px;background:#262626;border-bottom:1px solid #3a3a3a"></div>
<div class="t" style="left:905.0px;top:380.91px;font-size:7.9px;color:#dcdcdc;font-weight:400;">4</div>
<div class="a" style="left:913.7px;top:379px;width:7.4px;height:10.8px;background:#4a4a4a;border-radius:2.5px"></div>
<svg class="a" style="left:913.7px;top:379px;" width="7.4" height="10.8" viewBox="0 0 7.4 10.8"><path d="M2 3.6 L3.7 2 L5.4 3.6 M2 7.2 L3.7 8.8 L5.4 7.2" fill="none" stroke="#c8c8c8" stroke-width="0.8"/></svg>
<div class="a" style="left:926.9px;top:379.5px;width:45.7px;height:10.2px;background:#262626;border-bottom:1px solid #3a3a3a"></div>
<div class="t" style="left:965.6px;top:380.91px;font-size:7.9px;color:#dcdcdc;font-weight:400;">4</div>
<div class="a" style="left:974.2px;top:379px;width:7.4px;height:10.8px;background:#4a4a4a;border-radius:2.5px"></div>
<svg class="a" style="left:974.2px;top:379px;" width="7.4" height="10.8" viewBox="0 0 7.4 10.8"><path d="M2 3.6 L3.7 2 L5.4 3.6 M2 7.2 L3.7 8.8 L5.4 7.2" fill="none" stroke="#c8c8c8" stroke-width="0.8"/></svg>
<div class="t" style="left:884.7px;top:390.91px;font-size:7.2px;color:#b4b4b4;font-weight:400;">Tab</div>
<div class="t" style="left:939.2px;top:390.91px;font-size:7.2px;color:#b4b4b4;font-weight:400;">Indent</div>
<div class="a" style="left:867.6px;top:402.7px;width:8.4px;height:8.4px;background:#1a67df;border-radius:2px"></div>
<svg class="a" style="left:867.6px;top:402.7px;" width="9" height="9" viewBox="0 0 9 9"><path d="M1.9 4.3 L3.6 6.2 L6.7 2.2" fill="none" stroke="#ffffff" stroke-width="1.1"/></svg>
<div class="t" style="left:878.5px;top:402.91px;font-size:7.9px;color:#dcdcdc;font-weight:400;">Wrap lines</div>
<div class="a" style="left:815px;top:420.3px;width:165.5px;height:1px;background:#323232;"></div></div>
<div class="a" style="left:0;top:0;width:950px;height:612px;border-radius:8px;box-shadow:inset 0 0 0 1px rgba(0,0,0,0.55),inset 0 0 0 2px rgba(255,255,255,0.13)"></div>
</div>
</body></html>
